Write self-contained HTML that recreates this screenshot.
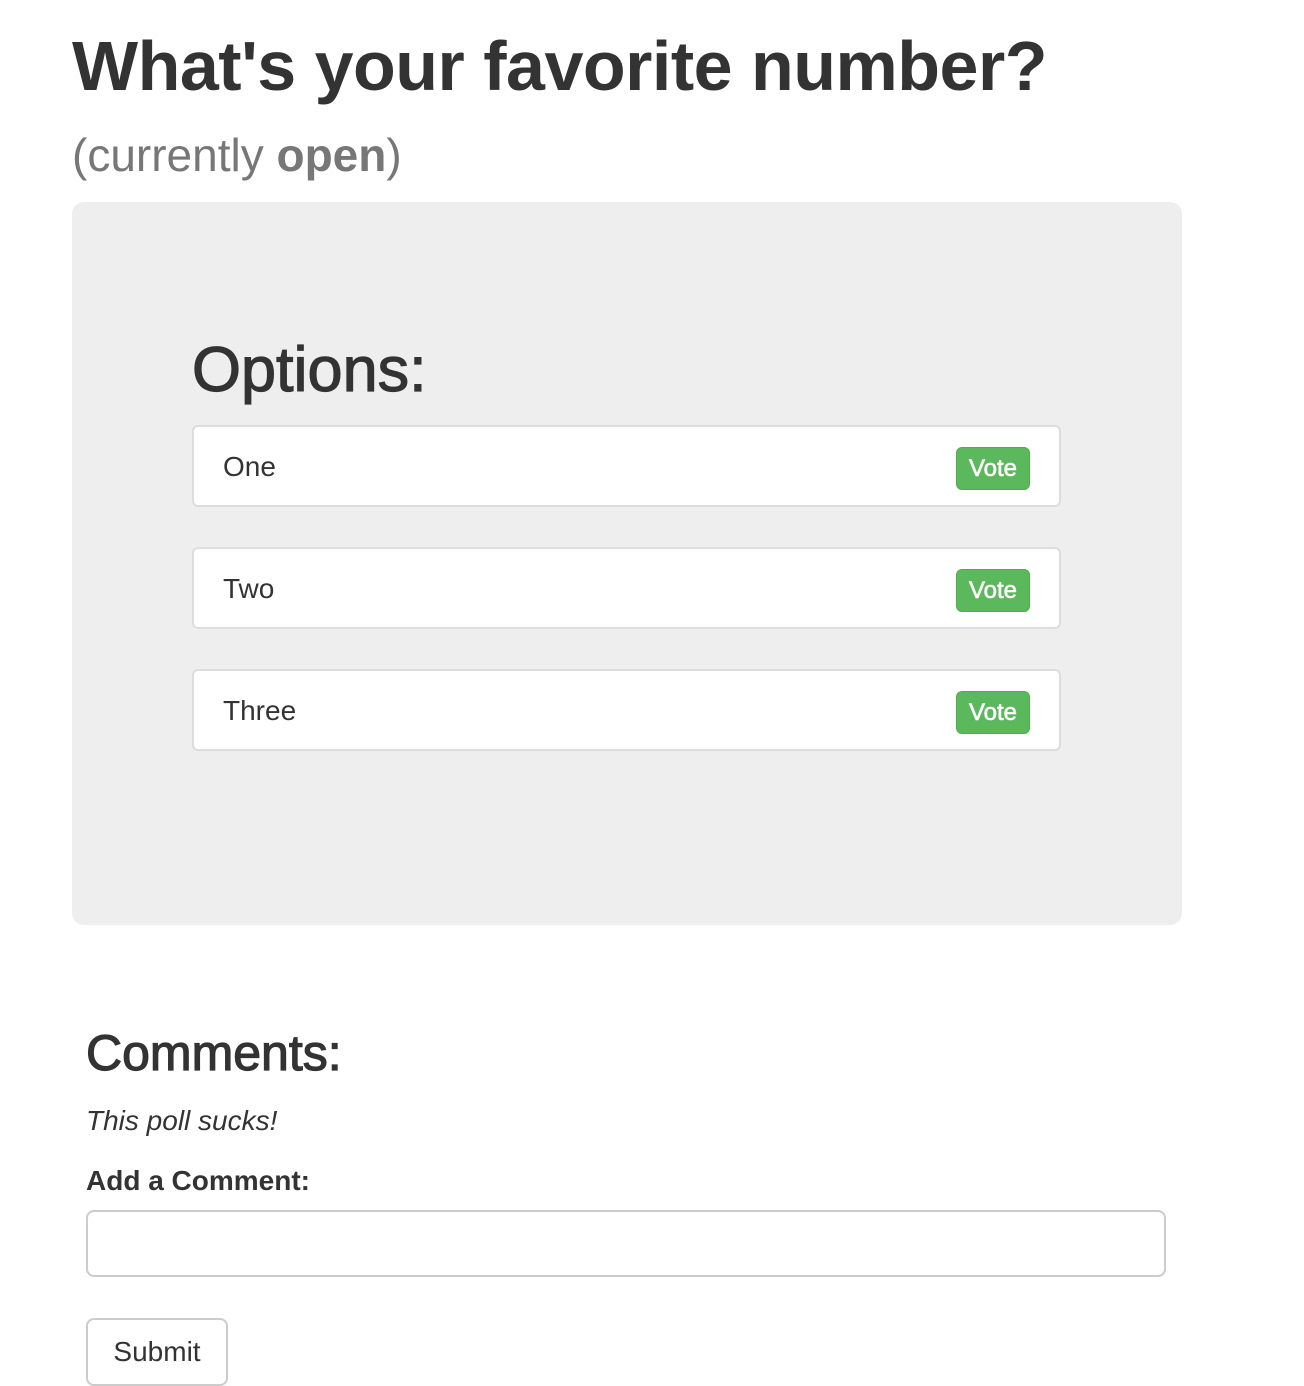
<!DOCTYPE html>
<html><head><meta charset="utf-8"><style>
*{margin:0;padding:0;box-sizing:border-box}
body{width:1304px;height:1386px;background:#fff;font-family:"Liberation Sans",Arial,sans-serif;color:#333;position:relative;overflow:hidden}
.a{position:absolute;line-height:1;white-space:nowrap}
.box{position:absolute;left:72px;top:202px;width:1110px;height:723px;background:#eee;border-radius:12px}
.row{position:absolute;left:192px;width:869px;height:82px;background:#fff;border:2px solid #ddd;border-radius:6px}
.row span{position:absolute;left:29px;top:26px;font-size:28px;line-height:1}
.vote{position:absolute;left:762px;top:20px;width:74px;height:43px;background:#5cb85c;border:1px solid #4cae4c;border-radius:6px;color:#fff;font-size:24px;text-align:center;line-height:41px;-webkit-text-stroke:0.6px #fff}
.m{-webkit-text-stroke:1.2px #333}
</style></head><body>
<div class="a" style="left:72px;top:31px;font-size:70px;font-weight:bold;letter-spacing:-0.5px">What's your favorite number?</div>
<div class="a" style="left:72px;top:132px;font-size:46px;color:#777">(currently <b>open</b>)</div>
<div class="box"></div>
<div class="a m" style="left:192px;top:339px;font-size:63px">Options:</div>
<div class="row" style="top:425px"><span>One</span><div class="vote">Vote</div></div>
<div class="row" style="top:547px"><span>Two</span><div class="vote">Vote</div></div>
<div class="row" style="top:669px"><span>Three</span><div class="vote">Vote</div></div>
<div class="a m" style="left:86px;top:1028px;font-size:50px">Comments:</div>
<div class="a" style="left:86px;top:1107px;font-size:28px;font-style:italic">This poll sucks!</div>
<div class="a" style="left:86px;top:1167px;font-size:28px;font-weight:bold">Add a Comment:</div>
<div style="position:absolute;left:86px;top:1210px;width:1080px;height:67px;border:2px solid #ccc;border-radius:8px"></div>
<div style="position:absolute;left:86px;top:1318px;width:142px;height:68px;border:2px solid #ccc;border-radius:8px;font-size:28px;text-align:center;line-height:64px">Submit</div>
</body></html>
